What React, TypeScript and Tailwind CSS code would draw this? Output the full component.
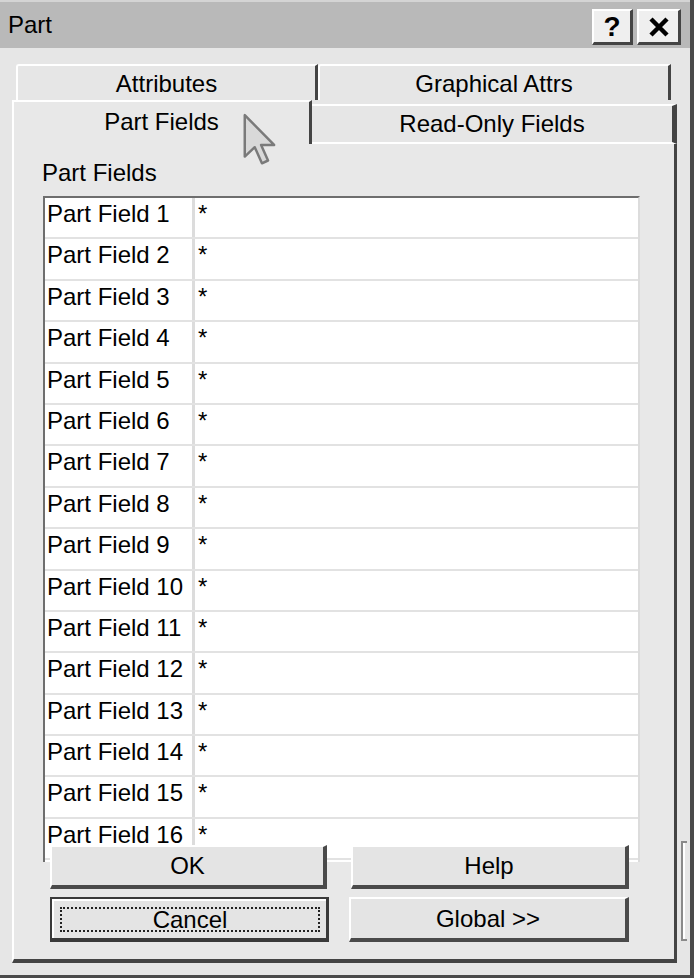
import React from 'react';

const rows = Array.from({ length: 16 }, (_, i) => `Part Field ${i + 1}`);

function Cursor() {
  return (
    <svg className="absolute left-[242px] top-[112px]" width="36" height="56" viewBox="0 0 13 20">
      <path
        d="M1 1 L1 16 L4.6 12.6 L7.2 18.4 L9.4 17.4 L6.9 11.8 L11.6 11.8 Z"
        fill="#d9d9d9"
        stroke="#7a7a7a"
        strokeWidth="0.9"
        strokeLinejoin="round"
      />
    </svg>
  );
}

function Button({ label, focused, className }: { label: string; focused?: boolean; className: string }) {
  if (focused) {
    return (
      <div className={`${className} border-2 border-[#3a3a3a] border-b-[4px] border-r-[3px] bg-[#e4e4e4]`}>
        <div className="h-full border-t-2 border-l-2 border-white p-[6px]">
          <div className="h-full border-2 border-dotted border-[#222] flex items-center justify-center leading-none">
            {label}
          </div>
        </div>
      </div>
    );
  }
  return (
    <div
      className={`${className} bg-[#e4e4e4] border-t-2 border-l-2 border-white border-r-[4px] border-b-[4px] border-r-[#4a4a4a] border-b-[#4a4a4a] flex items-center justify-center leading-none`}
    >
      {label}
    </div>
  );
}

export default function App() {
  return (
    <div className="relative w-[694px] h-[978px] overflow-hidden bg-[#e6e6e6] border-r-[4px] border-b-[3px] border-[#4a4a4a] font-['Liberation_Sans',Arial,sans-serif] text-[24px] text-black">
      {/* title bar */}
      <div className="h-[48px] bg-[#b9b9b9] border-t-2 border-[#d4d4d4] flex items-center pl-[8px] pr-[9px]">
        <span className="leading-none">Part</span>
        <div className="ml-auto flex gap-[4px] mt-[4px]">
          <div className="w-[41px] h-[36px] bg-[#efefef] border-t-2 border-l-2 border-white border-r-[3px] border-b-[3px] border-r-[#444] border-b-[#444] flex items-center justify-center font-bold text-[28px] leading-none">
            ?
          </div>
          <div className="w-[44px] h-[36px] bg-[#efefef] border-t-2 border-l-2 border-white border-r-[3px] border-b-[3px] border-r-[#444] border-b-[#444] flex items-center justify-center">
            <svg width="22" height="20" viewBox="0 0 22 20">
              <path d="M3 2 L19 18 M19 2 L3 18" stroke="#000" strokeWidth="4.5" />
            </svg>
          </div>
        </div>
      </div>

      <div className="flex pt-[16px] pl-[12px]">
        {/* tab control */}
        <div className="w-[665px] flex flex-col">
          <div className="h-[36px] flex pl-[4px]">
            <div className="w-[302px] bg-[#e6e6e6] border-t-2 border-l-2 border-white border-r-[3px] border-r-[#444] rounded-tl-[3px] flex items-center justify-center leading-none pt-[2px]">
              Attributes
            </div>
            <div className="w-[353px] bg-[#e6e6e6] border-t-2 border-l-2 border-white border-r-[3px] border-r-[#444] rounded-tl-[3px] flex items-center justify-center leading-none pt-[2px]">
              Graphical Attrs
            </div>
          </div>
          <div className="h-[44px] flex">
            <div className="w-[300px] bg-[#e8e8e8] border-t-2 border-l-2 border-white border-r-[3px] border-r-[#444] flex justify-center leading-none pt-[8px]">
              Part Fields
            </div>
            <div className="w-[365px] mt-[4px] bg-[#e6e6e6] border-t-2 border-white border-r-[5px] border-r-[#444] border-b-2 border-b-white flex items-center justify-center leading-none">
              Read-Only Fields
            </div>
          </div>

          {/* panel */}
          <div className="h-[819px] bg-[#e8e8e8] border-l-2 border-white border-r-[3px] border-r-[#444] border-b-[4px] border-b-[#444] pl-[28px] pt-[17px]">
            <div className="leading-none">Part Fields</div>
            <div className="mt-[11px] ml-[1px] w-[597px] h-[666px] overflow-hidden bg-white border-t-2 border-l-2 border-[#6e6e6e] border-r-2 border-r-[#dcdcdc]">
              {rows.map((r) => (
                <div key={r} className="h-[41.4px] flex border-b-2 border-[#e2e2e2]">
                  <div className="w-[147px] pl-[2px] pt-[4px] leading-none whitespace-nowrap">{r}</div>
                  <div className="w-[3px] bg-[#dcdcdc]" />
                  <div className="flex-1 pl-[3px] pt-[4px] leading-none">*</div>
                </div>
              ))}
            </div>
            <div className="-mt-[17px] ml-[8px] flex flex-col gap-[8px]">
              <div className="flex gap-[24px]">
                <Button label="OK" className="w-[277px] h-[44px]" />
                <Button label="Help" className="w-[278px] h-[44px]" />
              </div>
              <div className="flex gap-[20px]">
                <Button label="Cancel" focused className="w-[279px] h-[45px]" />
                <Button label="Global >>" className="w-[280px] h-[45px]" />
              </div>
            </div>
          </div>
        </div>

        {/* partially visible side control */}
        <div className="self-end mb-[22px] ml-[4px] w-[6px] h-[100px] border-t-2 border-b-2 border-l-2 border-[#8a8a8a] bg-[#e6e6e6]">
          <div className="h-full w-[2px] bg-white" />
        </div>
      </div>

      <Cursor />
    </div>
  );
}
